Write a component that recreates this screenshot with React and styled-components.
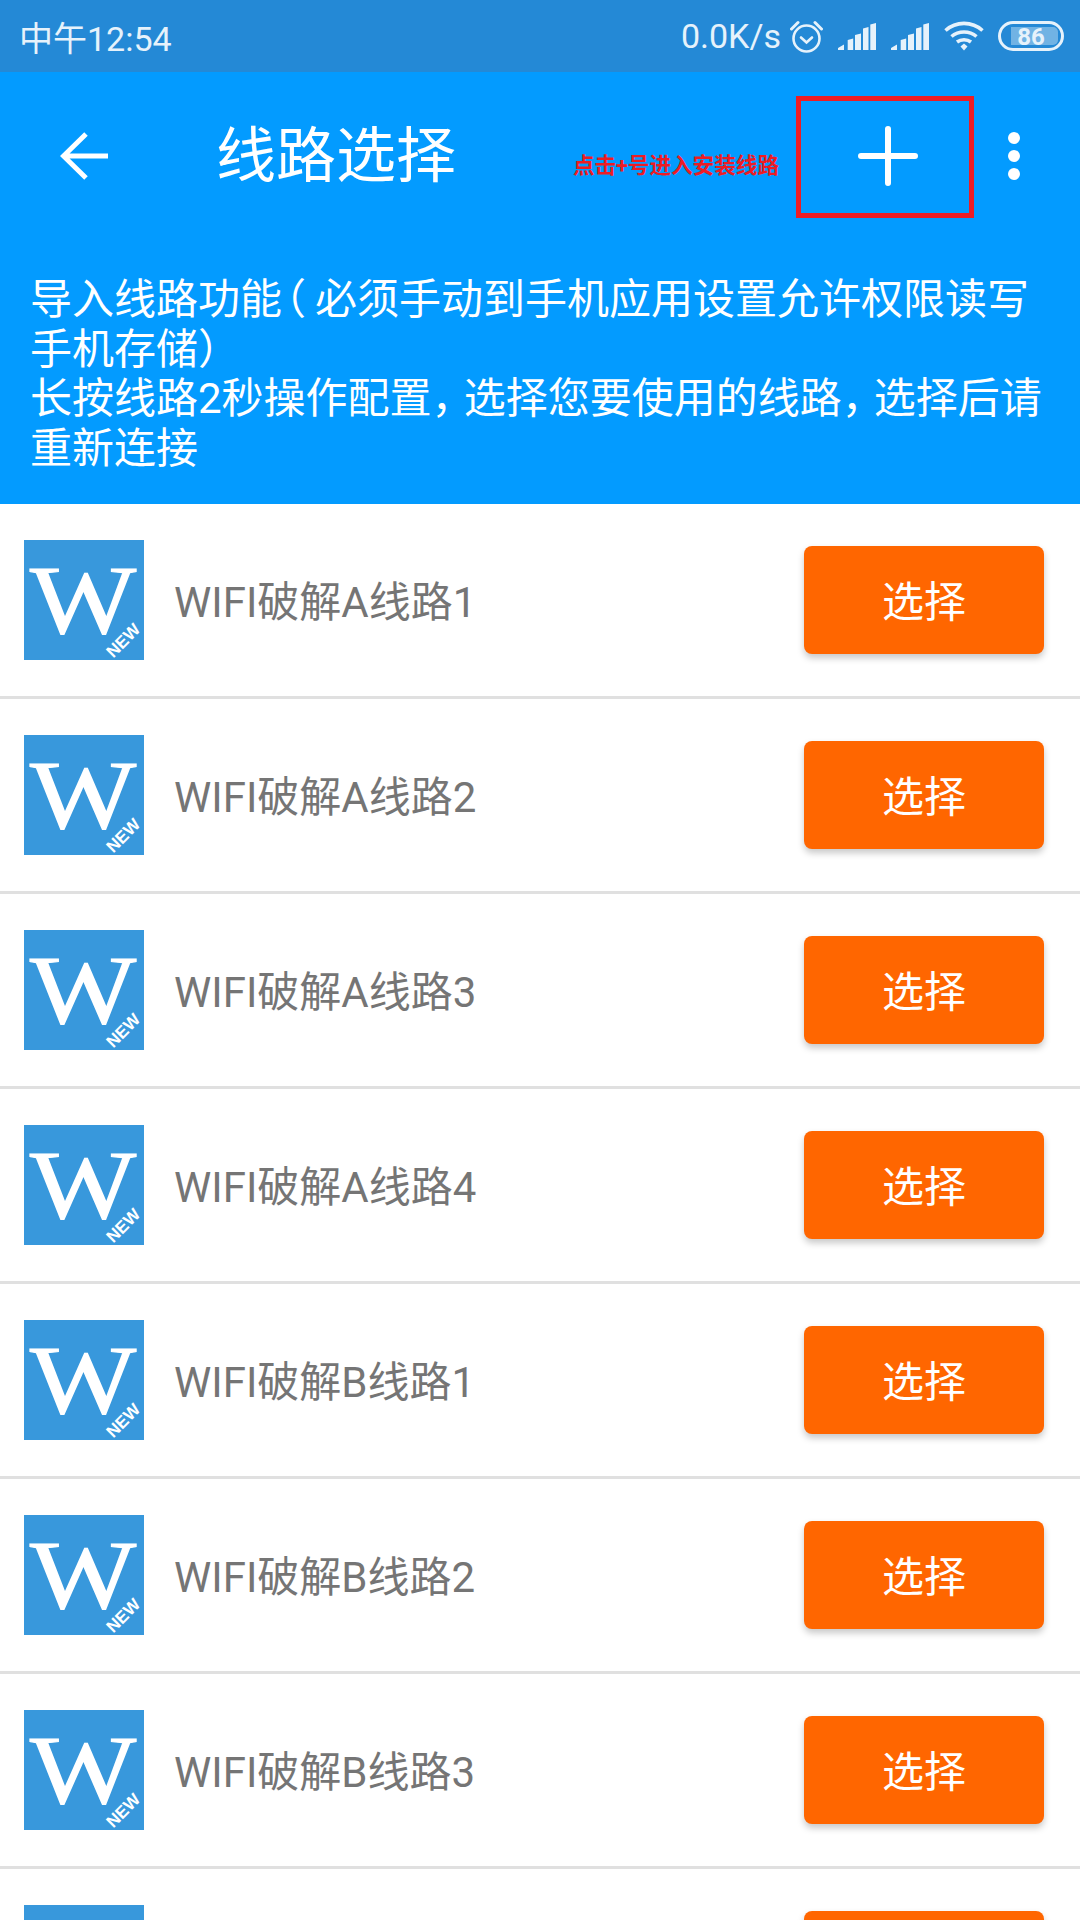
import React from 'react';
import styled, { createGlobalStyle } from 'styled-components';

const FONT = 'Roboto, "Noto Sans CJK SC", sans-serif';

const GlobalStyle = createGlobalStyle`
  html, body {
    margin: 0;
    padding: 0;
    background: #fff;
  }
  * {
    box-sizing: border-box;
  }
`;

const Page = styled.div`
  width: 1080px;
  height: 1920px;
  overflow: hidden;
  background: #fff;
  font-family: ${FONT};
`;

const StatusBar = styled.div`
  height: 72px;
  background: #2489d6;
  color: #e6f2fb;
  font-size: 34px;
  display: flex;
  align-items: center;
  justify-content: space-between;
  padding: 0 16px 0 19px;
`;

const StatusRight = styled.div`
  display: flex;
  align-items: center;
`;

const Speed = styled.span`
  margin-right: 9px;
`;

const StatusIcon = styled.svg`
  display: block;
  margin-left: ${(props) => props.$gap || 0}px;
`;

const Header = styled.header`
  background: #039bff;
  color: #fff;
`;

const Toolbar = styled.div`
  height: 168px;
  display: flex;
  align-items: center;
  padding-left: 60px;
`;

const Title = styled.div`
  font-size: 60px;
  margin: 2px 0 0 107px;
  flex: 1;
  line-height: 1;
`;

const Hint = styled.span`
  color: #ed1c24;
  font-size: 21.6px;
  font-weight: 700;
  margin: 15px 17px 0 0;
  white-space: nowrap;
`;

const AddBox = styled.div`
  width: 178px;
  height: 122px;
  margin-top: 2px;
  padding: 0 0 2px 5px;
  border: 5px solid #ed1c24;
  display: flex;
  align-items: center;
  justify-content: center;
`;

const MoreButton = styled.div`
  width: 106px;
  padding-left: 34px;
`;

const Notice = styled.div`
  font-size: 42px;
  line-height: 49.7px;
  padding: 35px 36px 30px 30px;
`;

// half-width punctuation, the reference font sets these narrower than a full em
const OpenParen = styled.span`
  font-feature-settings: "halt";
  margin: 0 9px 0 3px;
`;

const Comma = styled.span`
  font-feature-settings: "halt";
  margin-right: 11px;
`;

const Row = styled.div`
  height: 195px;
  border-bottom: 3px solid #e0e0e0;
  display: flex;
  align-items: center;
  padding: 0 36px 0 24px;
`;

const Logo = styled.div`
  position: relative;
  width: 120px;
  height: 120px;
  flex: none;
  background: #3898dc;
  color: #fff;
  overflow: hidden;
`;

const LogoLetter = styled.span`
  position: absolute;
  left: 5px;
  top: 11px;
  width: 108px;
  text-align: center;
  font-family: "Liberation Serif", serif;
  font-size: 97px;
  line-height: 100px;
  -webkit-text-stroke: 1.2px #fff;
  transform: scaleX(1.16);
`;

const LogoBadge = styled.span`
  position: absolute;
  left: 80px;
  top: 91px;
  font-family: "Liberation Sans", sans-serif;
  font-size: 17px;
  font-weight: 700;
  line-height: 20px;
  transform: rotate(-45deg);
`;

const RowName = styled.div`
  flex: 1;
  margin-left: 30px;
  padding-bottom: 3px;
  font-size: 42px;
  color: #757575;
`;

const SelectButton = styled.button`
  width: 240px;
  height: 108px;
  border: 0;
  border-radius: 8px;
  background: #ff6600;
  color: #fff;
  font-family: ${FONT};
  font-size: 42px;
  padding: 0 0 2px;
  box-shadow: 0 4px 7px rgba(0, 0, 0, 0.22);
`;

const AlarmIcon = () => (
  <StatusIcon width="33" height="33" viewBox="0 0 33 33" fill="none" stroke="#e6f2fb" strokeWidth="2.6">
    <circle cx="16.500" cy="18.500" r="13" />
    <path d="M11 17.500l5.500 5 5.500-5" strokeLinecap="round" />
    <path d="M1.500 9L8 2.500M31.500 9L25 2.500" strokeLinecap="round" strokeWidth="3" />
  </StatusIcon>
);

const SignalIcon = () => (
  <StatusIcon $gap={15} width="38" height="27" viewBox="0 0 38 27" fill="#e6f2fb">
    <path d="M0 27v-2l6-3.500V27zM9.700 27V17l5.500-1.500V27zM17 27V12l6-1.500V27zM25 27V5.500l5.500-1.500V27zM32.300 27V1.500L38 0v27z" />
  </StatusIcon>
);

const WifiIcon = () => (
  <StatusIcon $gap={15} width="40" height="30" viewBox="0 0 40 30" fill="none" stroke="#e6f2fb" strokeWidth="3.6">
    <path d="M1.500 9.500C12 0 28 0 38.500 9.500" />
    <path d="M7.500 15.500C14.500 9.500 25.500 9.500 32.500 15.500" />
    <path d="M13 21C17 18 23 18 27 21" />
    <path d="M16.500 25.500L20 22.500l3.500 3L20 29.500z" fill="#e6f2fb" stroke="none" />
  </StatusIcon>
);

const BatteryIcon = () => (
  <StatusIcon $gap={14} width="66" height="30" viewBox="0 0 66 30">
    <rect x="1.500" y="1.500" width="63" height="27" rx="13.500" fill="none" stroke="#e6f2fb" strokeWidth="3" />
    <path d="M13 6h42a5 5 0 0 1 5 5v8a5 5 0 0 1-5 5H13z" fill="#e6f2fb" fillOpacity="0.4" />
    <text x="33" y="24" textAnchor="middle" fontFamily="Roboto, sans-serif" fontWeight="700" fontSize="24" fill="#e6f2fb">86</text>
  </StatusIcon>
);

const BackIcon = () => (
  <svg width="49" height="48" viewBox="0 0 49 48" fill="none" stroke="#fff" strokeWidth="5" style={{ display: 'block' }}>
    <path d="M48 24H3M26 2L3.500 24 26 46" />
  </svg>
);

const PlusIcon = () => (
  <svg width="60" height="60" viewBox="0 0 60 60" stroke="#fff" strokeWidth="6" strokeLinecap="round" style={{ display: 'block' }}>
    <path d="M30 3v54M3 30h54" />
  </svg>
);

const MoreIcon = () => (
  <svg width="12" height="48" viewBox="0 0 12 48" fill="#fff" style={{ display: 'block' }}>
    <circle cx="6" cy="6" r="6" />
    <circle cx="6" cy="24" r="6" />
    <circle cx="6" cy="42" r="6" />
  </svg>
);

const routes = [
  'WIFI破解A线路1',
  'WIFI破解A线路2',
  'WIFI破解A线路3',
  'WIFI破解A线路4',
  'WIFI破解B线路1',
  'WIFI破解B线路2',
  'WIFI破解B线路3',
  'WIFI破解B线路4',
];

const App = () => (
  <Page>
    <GlobalStyle />
    <StatusBar>
      <span>中午12:54</span>
      <StatusRight>
        <Speed>0.0K/s</Speed>
        <AlarmIcon />
        <SignalIcon />
        <SignalIcon />
        <WifiIcon />
        <BatteryIcon />
      </StatusRight>
    </StatusBar>
    <Header>
      <Toolbar>
        <BackIcon />
        <Title>线路选择</Title>
        <Hint>点击+号进入安装线路</Hint>
        <AddBox>
          <PlusIcon />
        </AddBox>
        <MoreButton>
          <MoreIcon />
        </MoreButton>
      </Toolbar>
      <Notice>
        导入线路功能<OpenParen>（</OpenParen>必须手动到手机应用设置允许权限读写手机存储）
        <br />
        长按线路2秒操作配置<Comma>，</Comma>选择您要使用的线路<Comma>，</Comma>选择后请重新连接
      </Notice>
    </Header>
    {routes.map((name) => (
      <Row key={name}>
        <Logo>
          <LogoLetter>W</LogoLetter>
          <LogoBadge>NEW</LogoBadge>
        </Logo>
        <RowName>{name}</RowName>
        <SelectButton>选择</SelectButton>
      </Row>
    ))}
  </Page>
);

export default App;
